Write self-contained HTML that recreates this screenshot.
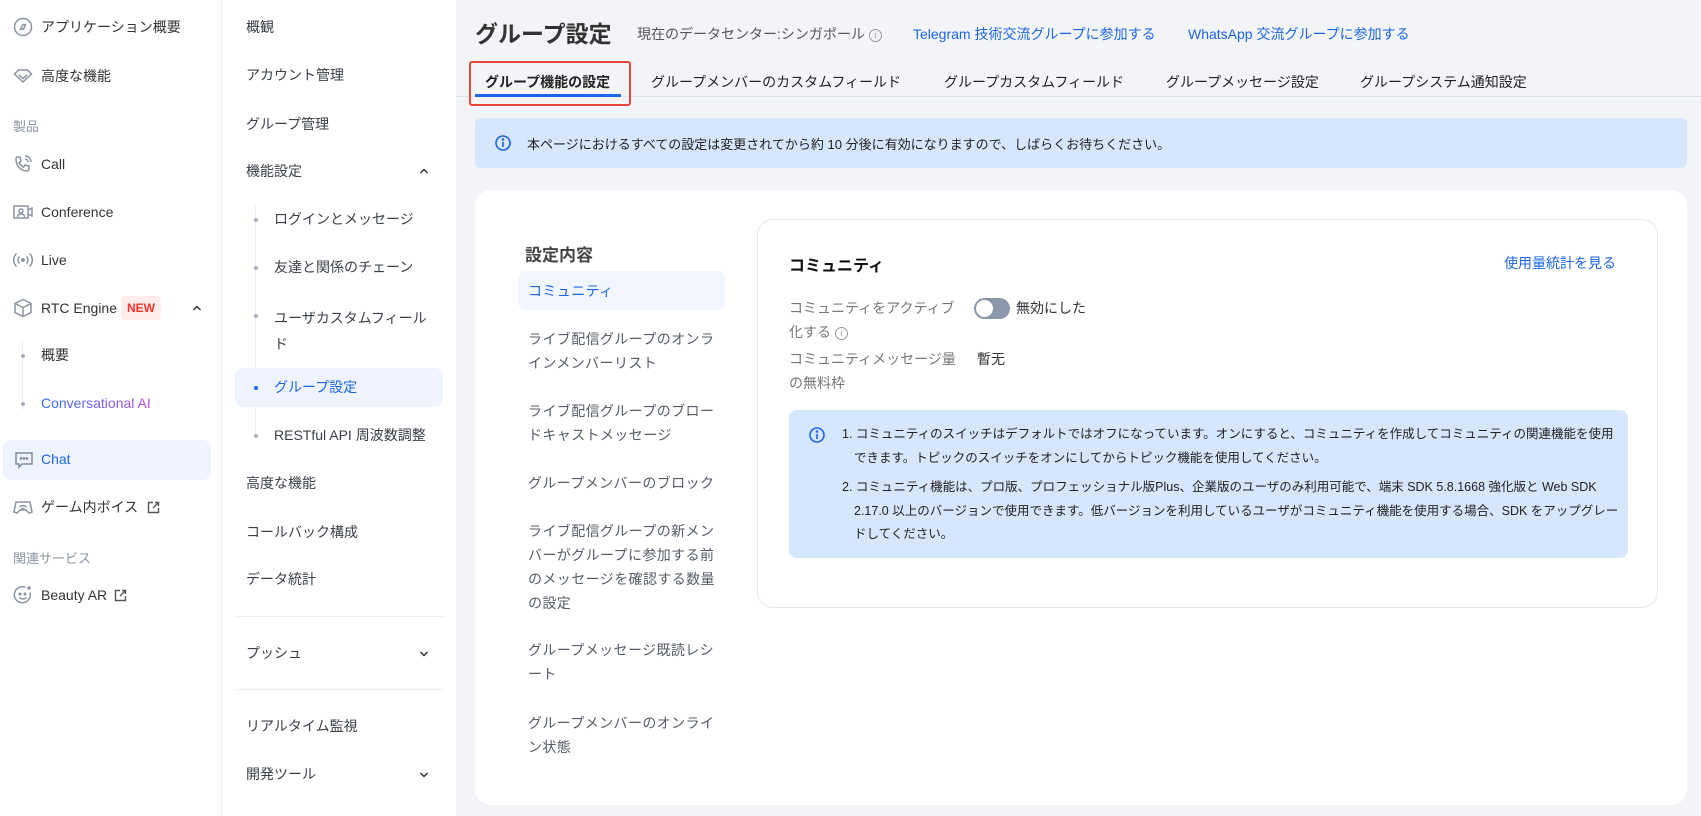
<!DOCTYPE html>
<html><head><meta charset="utf-8">
<style>
*{margin:0;padding:0;box-sizing:border-box}
body{width:1701px;height:816px;overflow:hidden;background:#f2f4f8;font-family:"Liberation Sans","Noto Sans CJK JP",sans-serif;color:#333;position:relative}
.a{position:absolute;white-space:nowrap}
#s1{position:absolute;left:0;top:0;width:222px;height:816px;background:#fff;border-right:1px solid #eceef2}
#s2{position:absolute;left:222px;top:0;width:234px;height:816px;background:#fff}
.n1{font-size:14px;color:#333;line-height:20px}
.lab{font-size:13px;color:#8c95a3}
.ic{position:absolute;left:13px;width:20px;height:20px}
.n2{font-size:14px;color:#3a3f47;line-height:20px}
.dot{position:absolute;width:4px;height:4px;border-radius:2px;background:#a9b0bc}
.tab{font-size:14px;color:#222;top:72px}
.it{font-size:14px;color:#555c66;line-height:24px;left:528px;white-space:normal;width:192px;letter-spacing:0.4px}
.blue{color:#1c66e5}
</style></head><body>

<div id="s1">
<svg class="ic" style="top:17px" viewBox="0 0 20 20" fill="none" stroke="#8a93a0" stroke-width="1.5"><circle cx="10" cy="10" r="8.5"/><path d="M12.5 7.5l-2 4.5-3 0.5 2-4.5z"/></svg>
<div class="a n1" style="left:41px;top:17px">アプリケーション概要</div>
<svg class="ic" style="top:66px" viewBox="0 0 20 20" fill="none" stroke="#8a93a0" stroke-width="1.5"><path d="M1.5 8l4-4h9l4 4-8.5 8z"/><path d="M6 9l4 3.5 4-3.5"/></svg>
<div class="a n1" style="left:41px;top:66px">高度な機能</div>
<div class="a lab" style="left:13px;top:116px">製品</div>
<svg class="ic" style="top:154px" viewBox="0 0 20 20" fill="none" stroke="#8a93a0" stroke-width="1.5"><path d="M4 3l3 0 1 4-2 1.5c1 2 2.5 3.5 4.5 4.5L12 11l4 1v3c0 1-1 2-2 2C8 17 3 12 3 5c0-1 .5-2 1-2z"/><path d="M12 5a3 3 0 0 1 3 3M12 2a6 6 0 0 1 6 6"/></svg>
<div class="a n1" style="left:41px;top:154px">Call</div>
<svg class="ic" style="top:202px" viewBox="0 0 20 20" fill="none" stroke="#8a93a0" stroke-width="1.5"><rect x="1" y="4" width="14" height="12"/><circle cx="8" cy="9" r="2"/><path d="M4.5 15c0-2 1.5-3 3.5-3s3.5 1 3.5 3M15 8l4-2v8l-4-2"/></svg>
<div class="a n1" style="left:41px;top:202px">Conference</div>
<svg class="ic" style="top:250px" viewBox="0 0 20 20" fill="none" stroke="#8a93a0" stroke-width="1.5"><circle cx="10" cy="10" r="1.2" fill="#8a93a0"/><path d="M6.5 6.5a5 5 0 0 0 0 7M13.5 6.5a5 5 0 0 1 0 7M3.5 3.5a9 9 0 0 0 0 13M16.5 3.5a9 9 0 0 1 0 13"/></svg>
<div class="a n1" style="left:41px;top:250px">Live</div>
<svg class="ic" style="top:298px" viewBox="0 0 20 20" fill="none" stroke="#8a93a0" stroke-width="1.5"><path d="M10 1.5l8 4v9l-8 4-8-4v-9z"/><path d="M2 5.5l8 4 8-4M10 9.5v9"/></svg>
<div class="a n1" style="left:41px;top:298px">RTC Engine</div>
<div class="a" style="left:121px;top:296px;width:40px;height:24px;background:#ffeceb;border-radius:4px;color:#f5342a;font-size:12px;font-weight:bold;text-align:center;line-height:24px">NEW</div>
<svg class="a" style="left:191px;top:302px" width="12" height="12" viewBox="0 0 12 12" fill="none" stroke="#333" stroke-width="1.5"><path d="M2.5 8l3.5-3.5L9.5 8"/></svg>
<div style="position:absolute;left:22px;top:340px;width:1px;height:70px;background:#eceef2"></div>
<div class="dot" style="left:21px;top:354px"></div>
<div class="a n1" style="left:41px;top:345px">概要</div>
<div class="dot" style="left:21px;top:402px"></div>
<div class="a n1" style="left:41px;top:393px;background:linear-gradient(90deg,#2a6cf5,#b84df5);-webkit-background-clip:text;color:transparent">Conversational AI</div>
<div class="a" style="left:3px;top:440px;width:208px;height:40px;background:#eef3fe;border-radius:8px"></div>
<svg class="ic" style="top:450px;left:14px" viewBox="0 0 20 20" fill="none" stroke="#7d8ba0" stroke-width="1.5"><path d="M2 3h16v11H8l-3 3v-3H2z"/><circle cx="7" cy="8.5" r=".6" fill="#7d8ba0"/><circle cx="10" cy="8.5" r=".6" fill="#7d8ba0"/><circle cx="13" cy="8.5" r=".6" fill="#7d8ba0"/></svg>
<div class="a n1 blue" style="left:41px;top:449px">Chat</div>
<svg class="ic" style="top:497px" viewBox="0 0 20 20" fill="none" stroke="#8a93a0" stroke-width="1.5"><path d="M3 5h14l2 10-3 1-3-3H7l-3 3-3-1z"/><path d="M6.5 10a5 5 0 0 1 7 0M8.5 12a2 2 0 0 1 3 0"/></svg>
<div class="a n1" style="left:41px;top:497px">ゲーム内ボイス</div>
<svg class="a" style="left:147px;top:501px" width="13" height="13" viewBox="0 0 13 13" fill="none" stroke="#555" stroke-width="1.4"><path d="M6 1.5H1.5v10h10V7M8 1.5h3.5V5M11.5 1.5L6 7"/></svg>
<div class="a lab" style="left:13px;top:548px">関連サービス</div>
<svg class="ic" style="top:585px" viewBox="0 0 20 20" fill="none" stroke="#8a93a0" stroke-width="1.5"><path d="M17 7.5A8 8 0 1 1 12.5 2.4"/><circle cx="7" cy="9" r=".8" fill="#8a93a0"/><circle cx="12" cy="9" r=".8" fill="#8a93a0"/><path d="M6.5 12.5c2 2 5 2 7 0M16 1v4M14 3h4"/></svg>
<div class="a n1" style="left:41px;top:585px">Beauty AR</div>
<svg class="a" style="left:114px;top:589px" width="13" height="13" viewBox="0 0 13 13" fill="none" stroke="#555" stroke-width="1.4"><path d="M6 1.5H1.5v10h10V7M8 1.5h3.5V5M11.5 1.5L6 7"/></svg>
</div>

<div id="s2">
<div class="a n2" style="left:24px;top:17px">概観</div>
<div class="a n2" style="left:24px;top:65px">アカウント管理</div>
<div class="a n2" style="left:24px;top:114px">グループ管理</div>
<div class="a n2" style="left:24px;top:161px">機能設定</div>
<svg class="a" style="left:196px;top:165px" width="12" height="12" viewBox="0 0 12 12" fill="none" stroke="#333" stroke-width="1.5"><path d="M2.5 8l3.5-3.5L9.5 8"/></svg>
<div style="position:absolute;left:33px;top:205px;width:1px;height:230px;background:#eceef2"></div>
<div class="dot" style="left:32px;top:218px"></div>
<div class="a n2" style="left:52px;top:209px">ログインとメッセージ</div>
<div class="dot" style="left:32px;top:266px"></div>
<div class="a n2" style="left:52px;top:257px">友達と関係のチェーン</div>
<div class="dot" style="left:32px;top:314px"></div>
<div class="a n2" style="left:52px;top:305px;line-height:26px;white-space:normal;width:160px">ユーザカスタムフィールド</div>
<div class="a" style="left:13px;top:368px;width:208px;height:39px;background:#eef3fe;border-radius:8px"></div>
<div class="dot" style="left:32px;top:386px;background:#1c66e5"></div>
<div class="a n2 blue" style="left:52px;top:377px">グループ設定</div>
<div class="dot" style="left:32px;top:434px"></div>
<div class="a n2" style="left:52px;top:425px">RESTful API 周波数調整</div>
<div class="a n2" style="left:24px;top:473px">高度な機能</div>
<div class="a n2" style="left:24px;top:522px">コールバック構成</div>
<div class="a n2" style="left:24px;top:569px">データ統計</div>
<div style="position:absolute;left:13px;top:616px;width:208px;height:1px;background:#eceef2"></div>
<div class="a n2" style="left:24px;top:643px">プッシュ</div>
<svg class="a" style="left:196px;top:648px" width="12" height="12" viewBox="0 0 12 12" fill="none" stroke="#333" stroke-width="1.5"><path d="M2.5 4l3.5 3.5L9.5 4"/></svg>
<div style="position:absolute;left:13px;top:689px;width:208px;height:1px;background:#eceef2"></div>
<div class="a n2" style="left:24px;top:716px">リアルタイム監視</div>
<div class="a n2" style="left:24px;top:764px">開発ツール</div>
<svg class="a" style="left:196px;top:769px" width="12" height="12" viewBox="0 0 12 12" fill="none" stroke="#333" stroke-width="1.5"><path d="M2.5 4l3.5 3.5L9.5 4"/></svg>
</div>

<div class="a" style="left:475px;top:15px;font-size:23px;font-weight:bold;color:#333">グループ設定</div>
<div class="a" style="left:637px;top:24px;font-size:14px;color:#555">現在のデータセンター:シンガポール <span style="display:inline-block;width:13px;height:13px;border:1px solid #999;border-radius:50%;font-size:9px;line-height:11px;text-align:center;color:#999;vertical-align:1px">i</span></div>
<div class="a blue" style="left:913px;top:24px;font-size:14px">Telegram 技術交流グループに参加する</div>
<div class="a blue" style="left:1188px;top:24px;font-size:14px">WhatsApp 交流グループに参加する</div>

<div style="position:absolute;left:456px;top:96px;width:1245px;height:1px;background:#dde3ee"></div>
<div class="a" style="left:469px;top:61px;width:162px;height:45px;border:2px solid #e8473b;border-radius:3px"></div>
<div class="a tab" style="left:485px;font-weight:bold">グループ機能の設定</div>
<div class="a" style="left:475px;top:94px;width:146px;height:3px;background:#1c66e5"></div>
<div class="a tab" style="left:651px">グループメンバーのカスタムフィールド</div>
<div class="a tab" style="left:944px">グループカスタムフィールド</div>
<div class="a tab" style="left:1166px">グループメッセージ設定</div>
<div class="a tab" style="left:1360px">グループシステム通知設定</div>

<div class="a" style="left:475px;top:118px;width:1212px;height:50px;background:#d5e6fd;border-radius:6px"></div>
<svg class="a" style="left:495px;top:135px" width="16" height="16" viewBox="0 0 16 16" fill="none" stroke="#1c66e5" stroke-width="1.6"><circle cx="8" cy="8" r="7"/><path d="M8 7v5"/><circle cx="8" cy="4.5" r=".5" fill="#1c66e5"/></svg>
<div class="a" style="left:527px;top:134px;font-size:13px;color:#222">本ページにおけるすべての設定は変更されてから約 10 分後に有効になりますので、しばらくお待ちください。</div>

<div class="a" style="left:475px;top:190px;width:1212px;height:615px;background:#fff;border-radius:16px"></div>
<div class="a" style="left:525px;top:241px;font-size:17px;font-weight:bold;color:#444">設定内容</div>
<div class="a" style="left:518px;top:271px;width:207px;height:39px;background:#f0f5fe;border-radius:8px"></div>
<div class="a it blue" style="top:279px">コミュニティ</div>
<div class="a it" style="top:327px">ライブ配信グループのオンラインメンバーリスト</div>
<div class="a it" style="top:399px">ライブ配信グループのブロードキャストメッセージ</div>
<div class="a it" style="top:471px">グループメンバーのブロック</div>
<div class="a it" style="top:519px">ライブ配信グループの新メンバーがグループに参加する前のメッセージを確認する数量の設定</div>
<div class="a it" style="top:638px">グループメッセージ既読レシート</div>
<div class="a it" style="top:711px">グループメンバーのオンライン状態</div>

<div class="a" style="left:757px;top:219px;width:901px;height:389px;border:1px solid #e5e8ef;border-radius:16px;background:#fff"></div>
<div class="a" style="left:789px;top:252px;font-size:16px;font-weight:bold;color:#111">コミュニティ</div>
<div class="a blue" style="left:1504px;top:253px;font-size:14px">使用量統計を見る</div>
<div class="a" style="left:789px;top:296px;font-size:14px;color:#777;line-height:24px;white-space:normal;width:170px">コミュニティをアクティブ化する <span style="display:inline-block;width:13px;height:13px;border:1px solid #999;border-radius:50%;font-size:9px;line-height:11px;text-align:center;color:#999;vertical-align:1px">i</span></div>
<div class="a" style="left:974px;top:298px;width:36px;height:21px;background:#8b97ab;border-radius:11px"><div style="position:absolute;left:2px;top:2px;width:17px;height:17px;border-radius:50%;background:#fff"></div></div>
<div class="a" style="left:1016px;top:298px;font-size:14px;color:#333">無効にした</div>
<div class="a" style="left:789px;top:347px;font-size:14px;color:#777;line-height:24px;white-space:normal;width:175px">コミュニティメッセージ量の無料枠</div>
<div class="a" style="left:977px;top:349px;font-size:14px;color:#333">暫无</div>

<div class="a" style="left:789px;top:410px;width:839px;height:148px;background:#d5e6fd;border-radius:8px"></div>
<svg class="a" style="left:809px;top:427px" width="16" height="16" viewBox="0 0 16 16" fill="none" stroke="#1c66e5" stroke-width="1.6"><circle cx="8" cy="8" r="7"/><path d="M8 7v5"/><circle cx="8" cy="4.5" r=".5" fill="#1c66e5"/></svg>
<div class="a" style="left:842px;top:423px;font-size:12.5px;color:#222;line-height:23.5px;white-space:normal;width:780px">
<div style="padding-left:12px;text-indent:-12px">1. コミュニティのスイッチはデフォルトではオフになっています。オンにすると、コミュニティを作成してコミュニティの関連機能を使用できます。トピックのスイッチをオンにしてからトピック機能を使用してください。</div>
<div style="padding-left:12px;text-indent:-12px;margin-top:6px">2. コミュニティ機能は、プロ版、プロフェッショナル版Plus、企業版のユーザのみ利用可能で、端末 SDK 5.8.1668 強化版と Web SDK 2.17.0 以上のバージョンで使用できます。低バージョンを利用しているユーザがコミュニティ機能を使用する場合、SDK をアップグレードしてください。</div>
</div>
</body></html>
